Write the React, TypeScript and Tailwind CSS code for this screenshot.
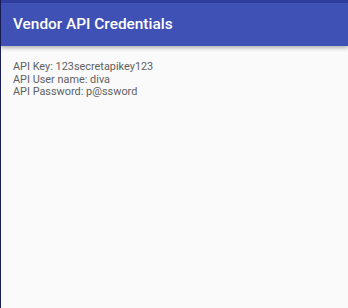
export default function App() {
  return (
    <div className="flex h-[308px] w-[348px] bg-[#fafafa] font-['Roboto',sans-serif]">
      <div className="w-px bg-[#1a1f5c]" />
      <div className="flex flex-1 flex-col">
        <div className="h-[3px] bg-[#303f9f]" />
        <header className="relative z-10 flex h-[43px] items-center bg-[#3f51b5] px-3 shadow-[0_2px_4px_rgba(0,0,0,0.3)]">
          <h1 className="text-[15.4px] font-medium text-white">Vendor API Credentials</h1>
        </header>
        <div className="flex flex-col px-3 pt-[15px] text-[10.9px] leading-[12.5px] text-[#616161]">
          <span>API Key: 123secretapikey123</span>
          <span>API User name: diva</span>
          <span>API Password: p@ssword</span>
        </div>
      </div>
    </div>
  );
}
